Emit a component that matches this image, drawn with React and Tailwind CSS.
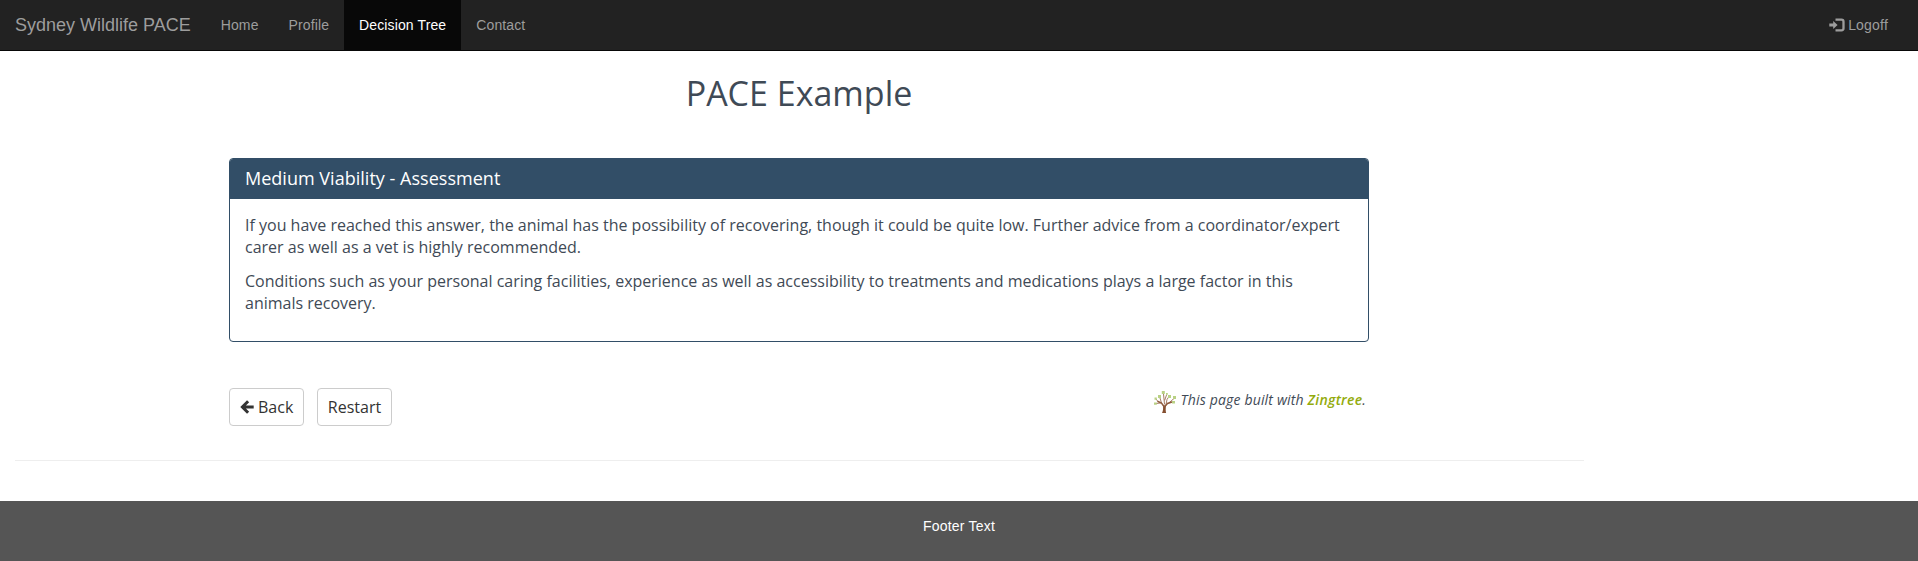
const navLink = "px-[15px] py-[15px] text-sm leading-5 tracking-[0.12px] text-[#9d9d9d]";

function LoginIcon() {
  return (
    <svg viewBox="0 0 16 14" className="mr-[3px] h-[14px] w-[16px]" fill="none">
      <path d="M.3 5.400h3.900V2.900L8.600 7l-4.400 4.100V8.600H.3z" fill="#9d9d9d" />
      <path d="M6.500 1.700h6a2 2 0 0 1 2 2v6.600a2 2 0 0 1-2 2h-6" stroke="#9d9d9d" strokeWidth="2.300" />
    </svg>
  );
}

function BackArrow() {
  return (
    <svg viewBox="0 0 14 14" className="mr-[4px] h-[14px] w-[14px]" fill="none" stroke="#333" strokeWidth="3">
      <path d="M8.100 1.300 2.400 7l5.700 5.700M2.500 7H13.700" />
    </svg>
  );
}

function TreeLogo() {
  return (
    <svg viewBox="0 0 24 24" className="h-6 w-6" fill="none">
      <path d="M9 23c1.200-2.500 1.300-4.500.9-7.500h3.200c-.6 3-.5 5 0 7.500z" fill="#854f30" />
      <g stroke="#8f5b3e" strokeLinecap="round">
        <path d="M11 16.500 8.500 13 5 11.500M11.800 16.500 14.500 13.500 19 12" strokeWidth="1.500" />
        <path d="M8.500 13 7 8M5 11.500 3 9M7.500 13 3 13.500M11.500 14 10.500 4M13 14.500 14 9.500 16 6.500M11.800 10 13.500 5M16 12.800 21 8.500" strokeWidth=".8" />
      </g>
      <g fill="#b9d184">
        <path d="M8.800 1h3v3h-3zM5 5h3v3H5zM1.500 7.500h2.300v2.300H1.500zM1 12.500h2.800v2.200H1zM13 3h1.800v1.800H13zM15 5h3v3h-3zM20 6h3v3h-3zM19 11h3v2.500h-3z" />
      </g>
    </svg>
  );
}

export default function App() {
  return (
    <div className="flex h-[561px] flex-col bg-white font-['Liberation_Sans',Arial,sans-serif]">
      <nav className="flex h-[51px] shrink-0 items-start border-b border-[#080808] bg-[#222]">
        <a className="px-[15px] py-[15px] text-lg leading-5 whitespace-nowrap text-[#9d9d9d]">Sydney Wildlife PACE</a>
        <a className={navLink}>Home</a>
        <a className={navLink}>Profile</a>
        <a className="bg-[#080808] px-[15px] py-[15px] text-sm leading-5 tracking-[0.12px] text-white">Decision Tree</a>
        <a className={navLink}>Contact</a>
        <a className="ml-auto flex items-center py-[15px] pr-[30px] text-sm leading-5 tracking-[0.2px] text-[#9d9d9d]">
          <LoginIcon />
          Logoff
        </a>
      </nav>

      <main className="ml-[229px] w-[1140px] font-['Open_Sans',sans-serif] text-base text-[#3f4a56]">
        <h1 className="pt-[20px] text-center text-[34px] leading-[44px]">PACE Example</h1>
        <section className="mt-[43px] h-[184px] overflow-hidden rounded border border-[#324e67]">
          <h2 className="h-10 bg-[#324e67] px-[15px] pt-[9px] text-lg leading-5 font-medium tracking-[0.02px] text-white">
            Medium Viability - Assessment
          </h2>
          <div className="flex flex-col gap-3 px-[15px] pt-[15px] leading-[22px]">
            <p>
              If you have reached this answer, the animal has the possibility of recovering, though it could be quite low. Further advice from a coordinator/expert<br />
              carer as well as a vet is highly recommended.
            </p>
            <p>
              Conditions such as your personal caring facilities, experience as well as accessibility to treatments and medications plays a large factor in this<br />
              animals recovery.
            </p>
          </div>
        </section>
        <div className="mt-[46px] flex h-[38px] items-start text-[#333]">
          <button className="mr-[13px] flex h-[38px] w-[75px] items-center rounded border border-[#ccc] pl-[10px]">
            <BackArrow />
            Back
          </button>
          <button className="h-[38px] w-[75px] rounded border border-[#ccc]">Restart</button>
          <div className="mr-[3px] ml-auto flex items-start text-sm leading-6 tracking-[0.17px] text-[#3f4a56] italic">
            <span className="mt-[2px]">
              <TreeLogo />
            </span>
            <span className="ml-[4px]">
              This page built with <b className="font-semibold tracking-[0.25px] text-[#93ab0d]">Zingtree</b>.
            </span>
          </div>
        </div>
      </main>

      <hr className="mt-[34px] ml-[15px] w-[1569px] border-[#eee]" />
      <footer className="mt-auto h-[60px] bg-[#555] pt-[15px] text-center text-sm leading-5 tracking-[0.2px] text-white">Footer Text</footer>
    </div>
  );
}
